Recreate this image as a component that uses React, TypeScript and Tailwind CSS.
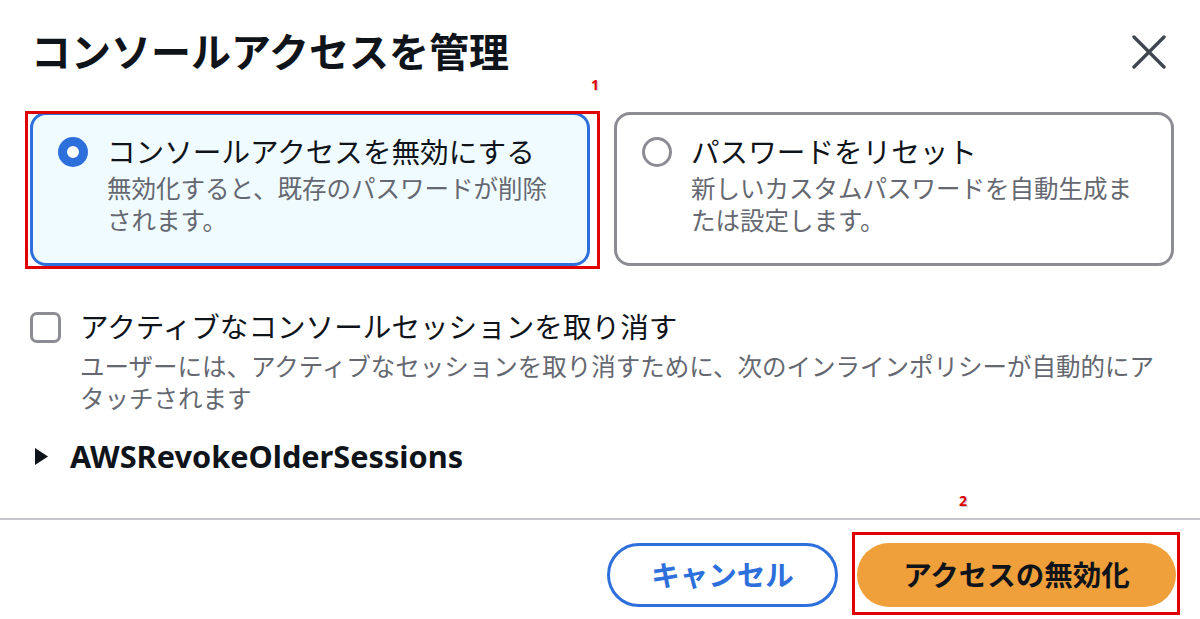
import React from 'react';

const font = "font-['Noto_Sans','Noto_Sans_CJK_JP',sans-serif]";

interface OptionCardProps {
  selected: boolean;
  title: string;
  description: string;
  children?: React.ReactNode;
}

const OptionCard: React.FC<OptionCardProps> = ({ selected, title, description, children }) => {
  return (
    <div
      className={`relative flex gap-[19px] rounded-[16px] border-[3px] pl-[25px] pr-[25px] pt-[19px] pb-[26px] ${
        selected ? 'border-[#2d6fdb] bg-[#f0fbff]' : 'border-[#8c8c94] bg-white'
      }`}
    >
      <div className="flex h-[36px] shrink-0 items-center">
        {selected ? (
          <span className="block h-[30px] w-[30px] rounded-full border-[9px] border-[#2d6fdb] bg-white" />
        ) : (
          <span className="block h-[30px] w-[30px] rounded-full border-[3px] border-[#8c8c94] bg-white" />
        )}
      </div>
      <div className="min-w-0 flex-1">
        <div className="text-[28.6px] leading-[36px] text-[#0f141a]">{title}</div>
        <div className="mt-[3px] text-[24.5px] leading-[32px] text-[#656871]">{description}</div>
      </div>
      {children}
    </div>
  );
};

export default function App() {
  return (
    <div className={`h-[619px] w-[1200px] overflow-hidden bg-white ${font}`}>
      {/* header */}
      <div className="flex items-center justify-between pl-[31px] pr-[31px] pt-[28px]">
        <h1 className="text-[40px] font-bold leading-[48px] text-[#0f141a]">コンソールアクセスを管理</h1>
        <button className="flex h-[40px] w-[40px] items-center justify-center text-[#414750]">
          <svg width="34" height="34" viewBox="0 0 34 34" fill="none" stroke="currentColor" strokeWidth="3.4" strokeLinecap="round">
            <path d="M2 2 L32 32 M32 2 L2 32" />
          </svg>
        </button>
      </div>

      {/* body */}
      <div className="pl-[30px] pr-[26px] pt-[36px]">
        <div className="grid grid-cols-2 gap-[24px]">
          <OptionCard
            selected
            title="コンソールアクセスを無効にする"
            description="無効化すると、既存のパスワードが削除されます。"
          >
            <span className="pointer-events-none absolute -left-[8px] -right-[13px] -top-[4px] -bottom-[6px] border-[3px] border-[#e00000]" />
            <span className="absolute left-[558px] -top-[38px] text-[14px] font-bold leading-[16px] text-[#e00000] [text-shadow:1px_1px_1px_rgba(0,0,0,0.25)]">
              1
            </span>
          </OptionCard>
          <OptionCard
            selected={false}
            title="パスワードをリセット"
            description="新しいカスタムパスワードを自動生成または設定します。"
          />
        </div>

        <div className="mt-[43px] flex gap-[19px]">
          <div className="flex h-[36px] shrink-0 items-center">
            <span className="block h-[31px] w-[31px] rounded-[7px] border-[3px] border-[#8c8c94] bg-white" />
          </div>
          <div className="min-w-0 flex-1">
            <div className="text-[28.6px] leading-[36px] text-[#0f141a]">アクティブなコンソールセッションを取り消す</div>
            <div className="mt-[6px] text-[24.5px] leading-[32px] text-[#656871]">
              ユーザーには、アクティブなセッションを取り消すために、次のインラインポリシーが自動的にアタッチされます
            </div>
          </div>
        </div>

        <div className="mt-[22px] flex items-center gap-[22px] pl-[5px]">
          <svg width="13" height="17" viewBox="0 0 13 17" className="text-[#0f141a]">
            <path d="M0 0 L13 8.5 L0 17 Z" fill="currentColor" />
          </svg>
          <span className="text-[30.7px] font-bold leading-[38px] text-[#0f141a]">AWSRevokeOlderSessions</span>
        </div>
      </div>

      {/* footer */}
      <div className="mt-[43px] border-t-2 border-[#c6c6cd]">
        <div className="flex justify-end gap-[19px] pr-[24px] pt-[23px]">
          <button className="flex h-[64px] w-[231px] items-center justify-center rounded-full border-[3px] border-[#2d6fdb] bg-white text-[28.5px] font-bold text-[#2d6fdb]">
            キャンセル
          </button>
          <div className="relative">
            <button className="flex h-[64px] w-[319px] items-center justify-center rounded-full bg-[#f0a03a] text-[28.5px] font-bold text-[#0f141a]">
              アクセスの無効化
            </button>
            <span className="pointer-events-none absolute -left-[5px] -right-[4px] -top-[11px] -bottom-[8px] border-[3px] border-[#e00000]" />
            <span className="absolute left-[102px] -top-[50px] text-[14px] font-bold leading-[16px] text-[#e00000] [text-shadow:1px_1px_1px_rgba(0,0,0,0.25)]">
              2
            </span>
          </div>
        </div>
      </div>
    </div>
  );
}
